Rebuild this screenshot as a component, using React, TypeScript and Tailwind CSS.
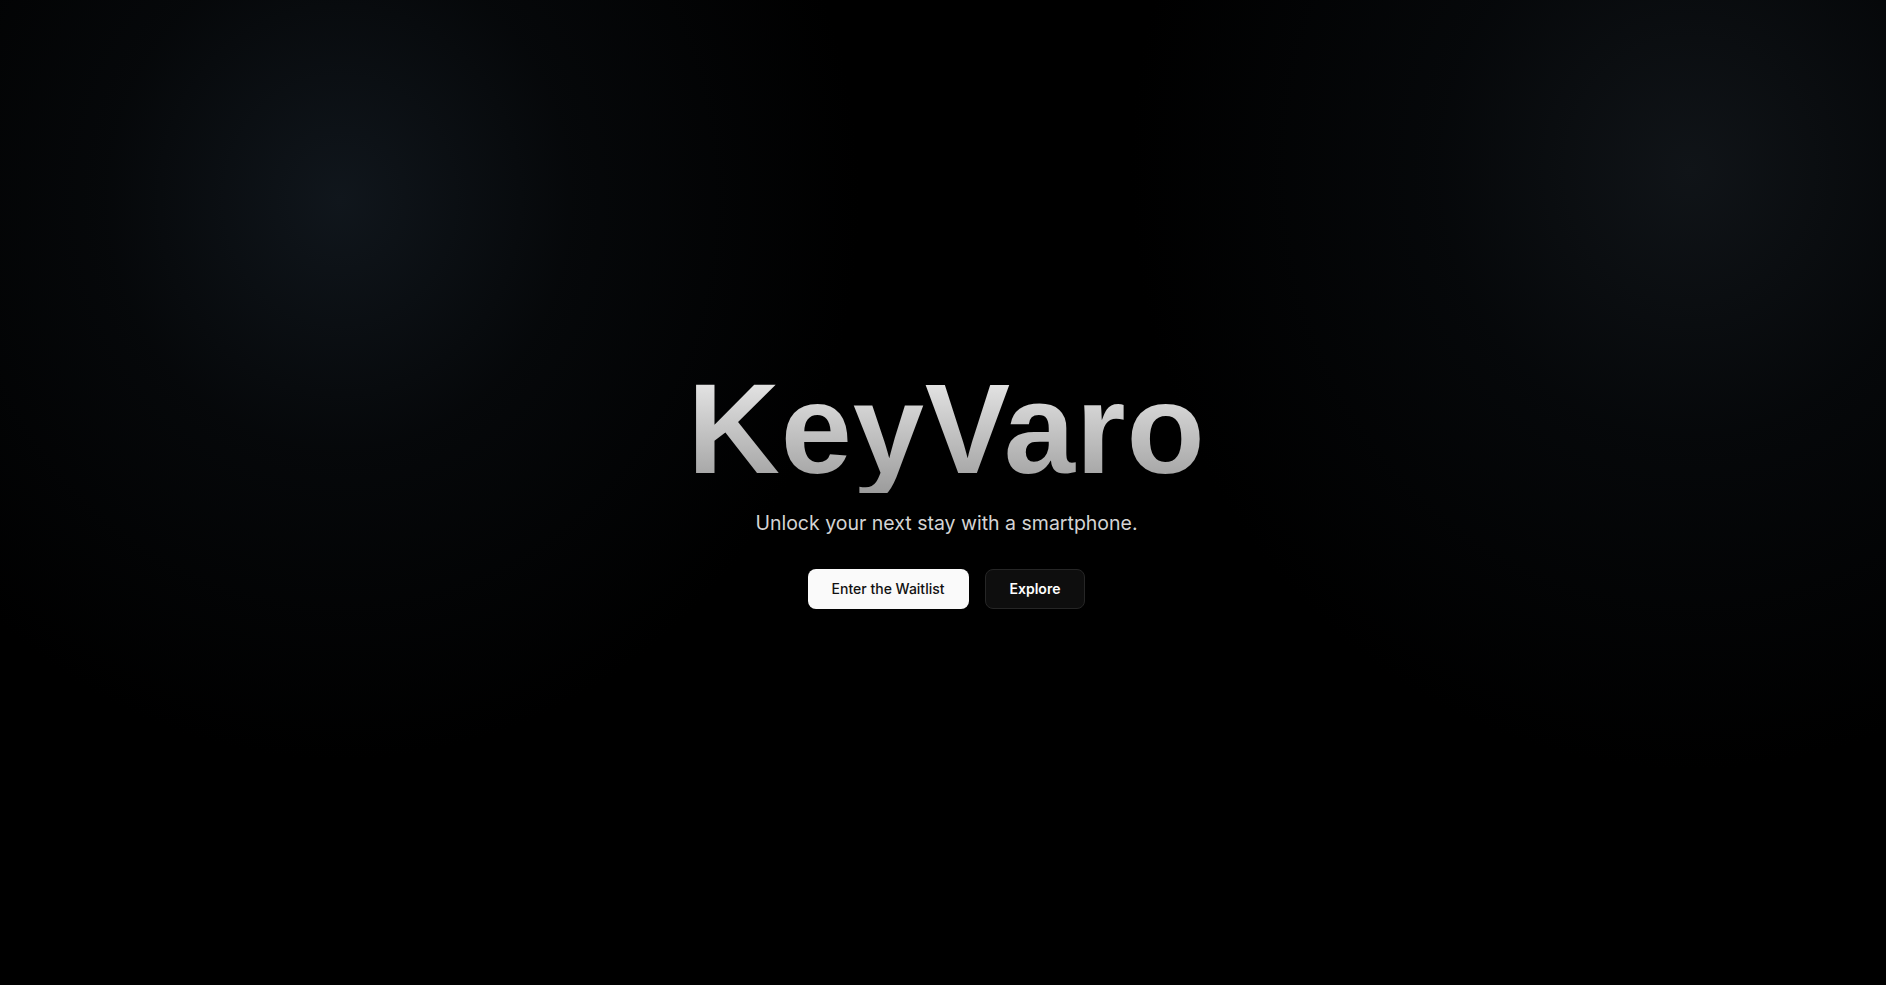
import React from "react";

export default function App() {
  return (
    <div
      className="relative min-h-screen w-full overflow-hidden bg-black bg-[radial-gradient(ellipse_520px_560px_at_340px_200px,rgba(16,22,28,1)_0%,rgba(8,11,14,0.7)_45%,rgba(0,0,0,0)_100%),radial-gradient(ellipse_560px_600px_at_1690px_170px,rgba(16,20,24,1)_0%,rgba(8,11,14,0.7)_45%,rgba(0,0,0,0)_100%)]"
      style={{ fontFamily: "Inter, 'Noto Sans', sans-serif" }}
    >
      <div className="flex min-h-screen flex-col items-center justify-center pb-[11px] pl-[7px]">
        <h1
          className="bg-gradient-to-b from-[#efefef] to-[#9c9c9c] bg-clip-text text-[128px] font-bold leading-none tracking-[0.8px] text-transparent"
          style={{ fontFamily: "'Liberation Sans', Arial, sans-serif" }}
        >
          KeyVaro
        </h1>
        <p className="mt-4 text-[19.5px] leading-7 text-[#d4d4d4]">
          Unlock your next stay with a smartphone.
        </p>
        <div className="mt-8 flex items-center gap-4">
          <button className="h-10 rounded-lg bg-[#fafafa] px-6 text-sm font-medium text-[#111111]">
            Enter the Waitlist
          </button>
          <button className="h-10 rounded-lg border border-[#262626] bg-[#0e0e0e] px-6 text-sm font-semibold text-white">
            Explore
          </button>
        </div>
      </div>
    </div>
  );
}
